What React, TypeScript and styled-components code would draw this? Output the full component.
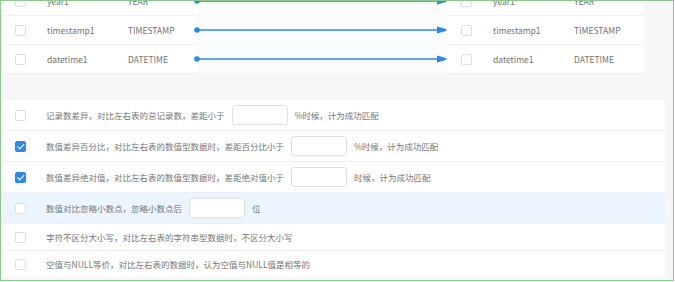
import styled, { createGlobalStyle } from 'styled-components';

type Column = { name: string; type: string };

type Rule = {
  key: string;
  checked?: boolean;
  before: string;
  after?: string;
  hasInput?: boolean;
};

const COLUMNS: Column[] = [
  { name: 'year1', type: 'YEAR' },
  { name: 'timestamp1', type: 'TIMESTAMP' },
  { name: 'datetime1', type: 'DATETIME' },
];

const RULES: Rule[] = [
  {
    key: 'count',
    before: '记录数差异，对比左右表的总记录数，差距小于',
    after: '%时候，计为成功匹配',
    hasInput: true,
  },
  {
    key: 'percent',
    checked: true,
    before: '数值差异百分比，对比左右表的数值型数据时，差距百分比小于',
    after: '%时候，计为成功匹配',
    hasInput: true,
  },
  {
    key: 'absolute',
    checked: true,
    before: '数值差异绝对值，对比左右表的数值型数据时，差距绝对值小于',
    after: '时候，计为成功匹配',
    hasInput: true,
  },
  {
    key: 'decimal',
    before: '数值对比忽略小数点，忽略小数点后',
    after: '位',
    hasInput: true,
  },
  { key: 'case', before: '字符不区分大小写，对比左右表的字符串型数据时，不区分大小写' },
  { key: 'null', before: '空值与NULL等价，对比左右表的数据时，认为空值与NULL值是相等的' },
];

const ROW_HEIGHT = 28; // px

const GlobalStyle = createGlobalStyle`
  body {
    margin: 0;
    background: #ffffff;
    font-family: 'Noto Sans CJK SC', 'Noto Sans', sans-serif;
  }
`;

const Arrow = () => (
  <svg width="251" height={ROW_HEIGHT} style={{ overflow: 'visible', display: 'block' }}>
    <circle cx="0" cy="14" r="2.8" fill="#2f89e4" />
    <line x1="0" y1="14" x2="243" y2="14" stroke="#2f89e4" strokeWidth="1.6" />
    <path d="M240 10.5 L249 13 Q250 14 249 15 L240 17.5 Z" fill="#2f89e4" />
  </svg>
);

const ColumnTable = ({ columns }: { columns: Column[] }) => (
  <>
    {columns.map((column) => (
      <TableRow key={column.name}>
        <CheckCell>
          <Checkbox />
        </CheckCell>
        <Cell>{column.name}</Cell>
        <Cell>{column.type}</Cell>
      </TableRow>
    ))}
  </>
);

export default function App() {
  return (
    <>
      <GlobalStyle />
      <Frame>
        <Content>
          <Mapping>
            <TableCard $width={195}>
              <ColumnTable columns={COLUMNS} />
            </TableCard>
            <Links>
              {COLUMNS.map((column) => (
                <LinkRow key={column.name}>
                  <Arrow />
                </LinkRow>
              ))}
            </Links>
            <TableCard $width={196}>
              <ColumnTable columns={COLUMNS} />
            </TableCard>
          </Mapping>

          <RulesCard>
            {RULES.map((rule) => (
              <RuleRow key={rule.key} $tall={!!rule.hasInput} $highlight={rule.key === 'decimal'}>
                <Checkbox $checked={rule.checked} />
                <RuleText>{rule.before}</RuleText>
                {rule.hasInput && <NumberInput />}
                {rule.after && <RuleText>{rule.after}</RuleText>}
              </RuleRow>
            ))}
          </RulesCard>
        </Content>
      </Frame>
    </>
  );
}

const Frame = styled.div`
  box-sizing: border-box;
  width: 674px;
  height: 281px;
  border: 1px solid #8cc98c;
  background: #f5f6f8;
  overflow: hidden;
`;

const Content = styled.div`
  margin-top: -14px;
`;

const Mapping = styled.div`
  display: flex;
  padding-left: 1px;
`;

const TableCard = styled.div<{ $width: number }>`
  width: ${({ $width }) => $width}px;
  background: #ffffff;
`;

const TableRow = styled.div`
  display: grid;
  grid-template-columns: 45px 81px 1fr;
  align-items: center;
  height: ${ROW_HEIGHT}px;
  border-bottom: 1px solid #eef0f3;
  font-size: 8.5px;
  color: #727272;
`;

const CheckCell = styled.div`
  display: flex;
  padding-left: 13px;
`;

const Cell = styled.div`
  white-space: nowrap;
`;

const Links = styled.div`
  width: 251px;
  background: #fafbfc;
`;

const LinkRow = styled.div`
  height: ${ROW_HEIGHT}px;
  border-bottom: 1px solid transparent;
`;

const Checkbox = styled.span<{ $checked?: boolean }>`
  position: relative;
  box-sizing: border-box;
  flex: none;
  width: 11px;
  height: 11px;
  border-radius: 2px;
  border: 1px solid ${({ $checked }) => ($checked ? '#2f89e4' : '#dcdfe6')};
  background: ${({ $checked }) => ($checked ? '#2f89e4' : '#ffffff')};

  &::after {
    content: '';
    display: ${({ $checked }) => ($checked ? 'block' : 'none')};
    position: absolute;
    left: 3px;
    top: 0.5px;
    width: 2.5px;
    height: 5.5px;
    border: solid #ffffff;
    border-width: 0 1.5px 1.5px 0;
    transform: rotate(45deg);
  }
`;

const RulesCard = styled.div`
  margin: 26px 8px 0 2px;
  background: #ffffff;
`;

const RuleRow = styled.div<{ $tall: boolean; $highlight: boolean }>`
  display: flex;
  align-items: center;
  height: ${({ $tall }) => ($tall ? 30 : 26)}px;
  padding-left: 12px;
  border-bottom: 1px solid #ebeef2;
  background: ${({ $highlight }) => ($highlight ? '#ecf5fe' : '#ffffff')};

  & > ${Checkbox} {
    margin-right: 20px;
  }

  &:last-child {
    border-bottom: none;
  }
`;

const RuleText = styled.span`
  font-size: 8.5px;
  color: #767676;
  white-space: nowrap;
`;

const NumberInput = styled.input.attrs({ type: 'text' })`
  box-sizing: border-box;
  width: 56px;
  height: 20px;
  margin: 0 7px;
  padding: 0 5px;
  border: 1px solid #dcdfe6;
  border-radius: 3px;
  background: #ffffff;
  outline: none;
`;
